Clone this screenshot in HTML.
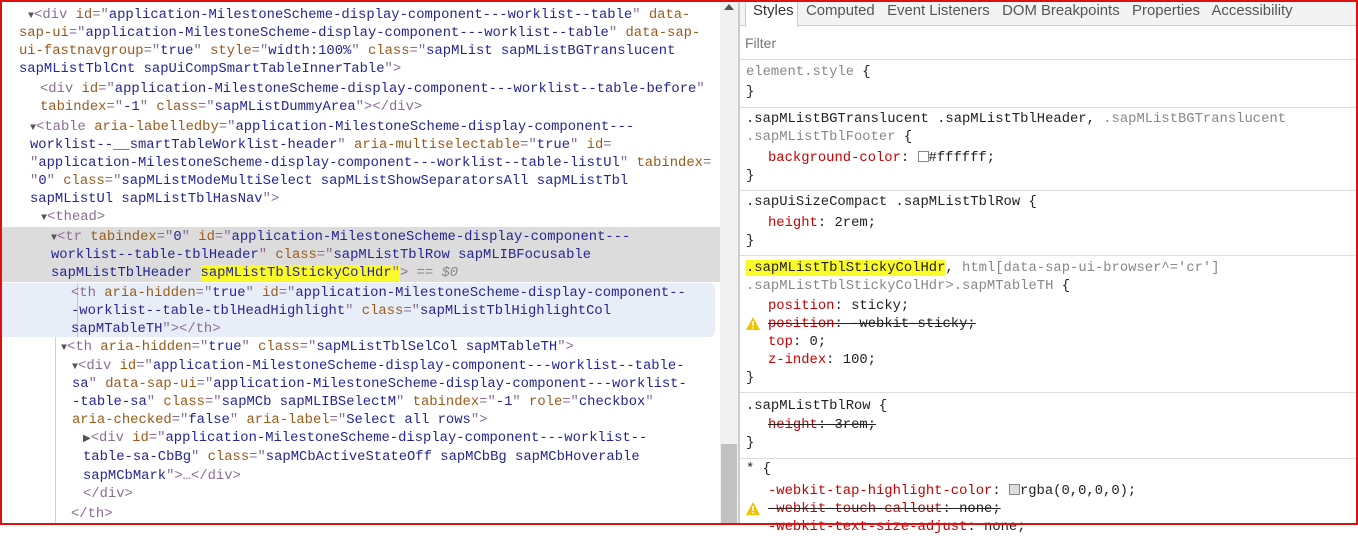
<!DOCTYPE html>
<html><head><style>
*{margin:0;padding:0;box-sizing:border-box}
body{width:1358px;height:525px;overflow:hidden;background:#fff;font-family:"Liberation Mono",monospace;font-size:13.85px;position:relative}
.frame{position:absolute;left:0;top:0;width:1358px;height:525px;border:2px solid #e01010;z-index:50;pointer-events:none}
.l{position:absolute;white-space:pre;line-height:18px;color:#222}
.t{color:#8a6d95}.a{color:#9b5a1a}.v{color:#252596}.g{color:#888}
.hl{background:#fbfb2a}
.p{color:#c80000}
.s{text-decoration:line-through}
.tri{font-size:10px;color:#555}
.warn{position:absolute;left:746px;width:14px;height:13px}
</style></head><body>
<div class="frame"></div>
<div style="position:absolute;left:2px;top:227px;width:718px;height:55px;background:#dcdcdc"></div>
<div style="position:absolute;left:2px;top:283px;width:713px;height:54px;background:#e8eef8;border-radius:0 6px 6px 0"></div>
<div style="position:absolute;left:77px;top:283px;width:1px;height:54px;background:#b8c8e0"></div>
<div style="position:absolute;left:55px;top:337px;width:1px;height:188px;background:#c8d4e6"></div>
<div style="position:absolute;left:720px;top:0;width:18px;height:525px;background:#f1f1f1"></div>
<div style="position:absolute;left:721px;top:444px;width:16px;height:81px;background:#c1c1c1"></div>
<div style="position:absolute;left:724px;top:4px;width:0;height:0;border-left:5px solid transparent;border-right:5px solid transparent;border-bottom:6px solid #555"></div>
<div style="position:absolute;left:738px;top:0;width:2px;height:525px;background:#ccc"></div>

<div class="l" style="left:28px;top:6px"><span class="tri">▼</span><span class="t">&lt;div</span> <span class="a">id</span><span class="t">="</span><span class="v">application-MilestoneScheme-display-component---worklist--table</span><span class="t">"</span> <span class="a">data-</span></div>
<div class="l" style="left:19px;top:24px"><span class="a">sap-ui</span><span class="t">="</span><span class="v">application-MilestoneScheme-display-component---worklist--table</span><span class="t">"</span> <span class="a">data-sap-</span></div>
<div class="l" style="left:19px;top:42px"><span class="a">ui-fastnavgroup</span><span class="t">="</span><span class="v">true</span><span class="t">"</span> <span class="a">style</span><span class="t">="</span><span class="v">width:100%</span><span class="t">"</span> <span class="a">class</span><span class="t">="</span><span class="v">sapMList sapMListBGTranslucent</span></div>
<div class="l" style="left:19px;top:60px"><span class="v">sapMListTblCnt sapUiCompSmartTableInnerTable</span><span class="t">"&gt;</span></div>
<div class="l" style="left:40px;top:80px"><span class="t">&lt;div</span> <span class="a">id</span><span class="t">="</span><span class="v">application-MilestoneScheme-display-component---worklist--table-before</span><span class="t">"</span></div>
<div class="l" style="left:40px;top:98px"><span class="a">tabindex</span><span class="t">="</span><span class="v">-1</span><span class="t">"</span> <span class="a">class</span><span class="t">="</span><span class="v">sapMListDummyArea</span><span class="t">"&gt;&lt;/div&gt;</span></div>
<div class="l" style="left:30px;top:118px"><span class="tri">▼</span><span class="t">&lt;table</span> <span class="a">aria-labelledby</span><span class="t">="</span><span class="v">application-MilestoneScheme-display-component---</span></div>
<div class="l" style="left:30px;top:136px"><span class="v">worklist--__smartTableWorklist-header</span><span class="t">"</span> <span class="a">aria-multiselectable</span><span class="t">="</span><span class="v">true</span><span class="t">"</span> <span class="a">id</span><span class="t">=</span></div>
<div class="l" style="left:30px;top:154px"><span class="t">"</span><span class="v">application-MilestoneScheme-display-component---worklist--table-listUl</span><span class="t">"</span> <span class="a">tabindex</span><span class="t">=</span></div>
<div class="l" style="left:30px;top:172px"><span class="t">"</span><span class="v">0</span><span class="t">"</span> <span class="a">class</span><span class="t">="</span><span class="v">sapMListModeMultiSelect sapMListShowSeparatorsAll sapMListTbl</span></div>
<div class="l" style="left:30px;top:190px"><span class="v">sapMListUl sapMListTblHasNav</span><span class="t">"&gt;</span></div>
<div class="l" style="left:41px;top:208px"><span class="tri">▼</span><span class="t">&lt;thead&gt;</span></div>
<div class="l" style="left:51px;top:228px"><span class="tri">▼</span><span class="t">&lt;tr</span> <span class="a">tabindex</span><span class="t">="</span><span class="v">0</span><span class="t">"</span> <span class="a">id</span><span class="t">="</span><span class="v">application-MilestoneScheme-display-component---</span></div>
<div class="l" style="left:51px;top:246px"><span class="v">worklist--table-tblHeader</span><span class="t">"</span> <span class="a">class</span><span class="t">="</span><span class="v">sapMListTblRow sapMLIBFocusable</span></div>
<div class="l" style="left:51px;top:264px"><span class="v">sapMListTblHeader <span class="hl">sapMListTblStickyColHdr</span></span><span class="t hl">"</span><span class="t">&gt;</span> <span class="g" style="font-style:italic">== $0</span></div>
<div class="l" style="left:71px;top:284px"><span class="t">&lt;th</span> <span class="a">aria-hidden</span><span class="t">="</span><span class="v">true</span><span class="t">"</span> <span class="a">id</span><span class="t">="</span><span class="v">application-MilestoneScheme-display-component--</span></div>
<div class="l" style="left:71px;top:302px"><span class="v">-worklist--table-tblHeadHighlight</span><span class="t">"</span> <span class="a">class</span><span class="t">="</span><span class="v">sapMListTblHighlightCol</span></div>
<div class="l" style="left:71px;top:320px"><span class="v">sapMTableTH</span><span class="t">"&gt;&lt;/th&gt;</span></div>
<div class="l" style="left:61px;top:338px"><span class="tri">▼</span><span class="t">&lt;th</span> <span class="a">aria-hidden</span><span class="t">="</span><span class="v">true</span><span class="t">"</span> <span class="a">class</span><span class="t">="</span><span class="v">sapMListTblSelCol sapMTableTH</span><span class="t">"&gt;</span></div>
<div class="l" style="left:72px;top:357px"><span class="tri">▼</span><span class="t">&lt;div</span> <span class="a">id</span><span class="t">="</span><span class="v">application-MilestoneScheme-display-component---worklist--table-</span></div>
<div class="l" style="left:72px;top:375px"><span class="v">sa</span><span class="t">"</span> <span class="a">data-sap-ui</span><span class="t">="</span><span class="v">application-MilestoneScheme-display-component---worklist-</span></div>
<div class="l" style="left:72px;top:393px"><span class="v">-table-sa</span><span class="t">"</span> <span class="a">class</span><span class="t">="</span><span class="v">sapMCb sapMLIBSelectM</span><span class="t">"</span> <span class="a">tabindex</span><span class="t">="</span><span class="v">-1</span><span class="t">"</span> <span class="a">role</span><span class="t">="</span><span class="v">checkbox</span><span class="t">"</span></div>
<div class="l" style="left:72px;top:411px"><span class="a">aria-checked</span><span class="t">="</span><span class="v">false</span><span class="t">"</span> <span class="a">aria-label</span><span class="t">="</span><span class="v">Select all rows</span><span class="t">"&gt;</span></div>
<div class="l" style="left:83px;top:429px"><span class="tri">▶</span><span class="t">&lt;div</span> <span class="a">id</span><span class="t">="</span><span class="v">application-MilestoneScheme-display-component---worklist--</span></div>
<div class="l" style="left:83px;top:448px"><span class="v">table-sa-CbBg</span><span class="t">"</span> <span class="a">class</span><span class="t">="</span><span class="v">sapMCbActiveStateOff sapMCbBg sapMCbHoverable</span></div>
<div class="l" style="left:83px;top:467px"><span class="v">sapMCbMark</span><span class="t">"&gt;…&lt;/div&gt;</span></div>
<div class="l" style="left:83px;top:485px"><span class="t">&lt;/div&gt;</span></div>
<div class="l" style="left:71px;top:505px"><span class="t">&lt;/th&gt;</span></div>

<div style="position:absolute;left:740px;top:0;width:618px;height:26px;background:#f3f3f3;border-bottom:1px solid #ccc"></div>
<div style="position:absolute;left:745px;top:1px;width:53px;height:26px;background:#fff;border:1px solid #ccc;border-bottom:none"></div>
<div style="position:absolute;left:753px;top:3px;font-family:'Liberation Sans',sans-serif;font-size:14.9px;color:#333;white-space:pre">Styles   <span style="color:#555">Computed   Event Listeners   DOM Breakpoints   Properties   Accessibility</span></div>
<div style="position:absolute;left:745px;top:35px;font-family:'Liberation Sans',sans-serif;font-size:14px;color:#777">Filter</div>
<div style="position:absolute;left:740px;top:59px;width:618px;height:1px;background:#ddd"></div>
<div style="position:absolute;left:740px;top:107px;width:618px;height:1px;background:#ddd"></div>
<div style="position:absolute;left:740px;top:190px;width:618px;height:1px;background:#ddd"></div>
<div style="position:absolute;left:740px;top:255px;width:618px;height:1px;background:#ddd"></div>
<div style="position:absolute;left:740px;top:392px;width:618px;height:1px;background:#ddd"></div>
<div style="position:absolute;left:740px;top:458px;width:618px;height:1px;background:#ddd"></div>

<div class="l" style="left:746px;top:63px"><span class="g">element.style</span> {</div>
<div class="l" style="left:746px;top:83px">}</div>
<div class="l" style="left:746px;top:110px">.sapMListBGTranslucent .sapMListTblHeader, <span class="g">.sapMListBGTranslucent</span></div>
<div class="l" style="left:746px;top:128px"><span class="g">.sapMListTblFooter</span> {</div>
<div class="l" style="left:768px;top:149px"><span class="p">background-color</span>: <span style="display:inline-block;width:11px;height:11px;border:1px solid #888;vertical-align:-1px"></span>#ffffff;</div>
<div class="l" style="left:746px;top:167px">}</div>
<div class="l" style="left:746px;top:193px">.sapUiSizeCompact .sapMListTblRow {</div>
<div class="l" style="left:768px;top:214px"><span class="p">height</span>: 2rem;</div>
<div class="l" style="left:746px;top:232px">}</div>
<div class="l" style="left:746px;top:259px"><span class="hl">.sapMListTblStickyColHdr</span>, <span class="g">html[data-sap-ui-browser^='cr']</span></div>
<div class="l" style="left:746px;top:277px"><span class="g">.sapMListTblStickyColHdr&gt;.sapMTableTH</span> {</div>
<div class="l" style="left:768px;top:297px"><span class="p">position</span>: sticky;</div>
<div class="l s" style="left:768px;top:315px"><span class="p">position</span>: -webkit-sticky;</div>
<div class="l" style="left:768px;top:333px"><span class="p">top</span>: 0;</div>
<div class="l" style="left:768px;top:351px"><span class="p">z-index</span>: 100;</div>
<div class="l" style="left:746px;top:369px">}</div>
<div class="l" style="left:746px;top:397px">.sapMListTblRow {</div>
<div class="l s" style="left:768px;top:416px"><span class="p">height</span>: 3rem;</div>
<div class="l" style="left:746px;top:434px">}</div>
<div class="l" style="left:746px;top:460px">* {</div>
<div class="l" style="left:768px;top:482px"><span class="p">-webkit-tap-highlight-color</span>: <span style="display:inline-block;width:11px;height:11px;border:1px solid #888;background:#ddd;vertical-align:-1px"></span>rgba(0,0,0,0);</div>
<div class="l s" style="left:768px;top:500px"><span class="p">-webkit-touch-callout</span>: none;</div>
<div class="l" style="left:768px;top:518px"><span class="p">-webkit-text-size-adjust</span>: none;</div>
<svg class="warn" style="top:317px" viewBox="0 0 14 13"><path d="M7 0L14 13H0Z" fill="#f2c200"/><rect x="6.2" y="4" width="1.6" height="5" fill="#fff"/><rect x="6.2" y="10" width="1.6" height="1.6" fill="#fff"/></svg>
<svg class="warn" style="top:502px" viewBox="0 0 14 13"><path d="M7 0L14 13H0Z" fill="#f2c200"/><rect x="6.2" y="4" width="1.6" height="5" fill="#fff"/><rect x="6.2" y="10" width="1.6" height="1.6" fill="#fff"/></svg>
</body></html>
